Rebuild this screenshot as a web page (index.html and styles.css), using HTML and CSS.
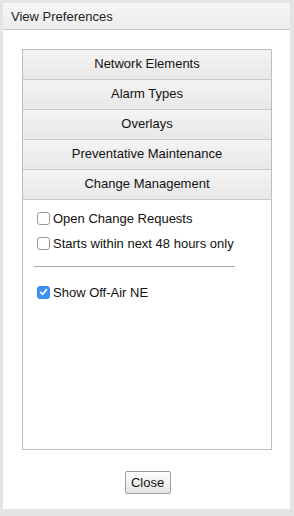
FILE: index.html
```html
<!DOCTYPE html>
<html>
<head>
<meta charset="utf-8">
<link rel="stylesheet" href="styles.css">
</head>
<body>
<div class="dialog">
  <div class="titlebar">View Preferences</div>
  <div class="dialog-body">
    <div class="panel">
      <div class="acc-head">Network Elements</div>
      <div class="acc-head">Alarm Types</div>
      <div class="acc-head">Overlays</div>
      <div class="acc-head">Preventative Maintenance</div>
      <div class="acc-head">Change Management</div>
      <div class="acc-content">
        <label class="opt"><span class="box"></span>Open Change Requests</label>
        <label class="opt"><span class="box"></span>Starts within next 48 hours only</label>
        <div class="sep"></div>
        <label class="opt"><span class="box checked"><svg width="12" height="12" viewBox="0 0 12 12"><path d="M2.8 6.3 L5 8.5 L9.3 3.4" fill="none" stroke="#fff" stroke-width="1.8" stroke-linecap="round" stroke-linejoin="round"/></svg></span>Show Off-Air NE</label>
      </div>
    </div>
    <div class="actions">
      <button class="btn">Close</button>
    </div>
  </div>
</div>
</body>
</html>
```
FILE: styles.css
```css
html, body {
  margin: 0;
  padding: 0;
}
body {
  background: #e4e4e4;
  font-family: "Liberation Sans", Arial, Helvetica, sans-serif;
  font-size: 13px;
  color: #111;
  padding: 3px 4px 0 3px;
}
.dialog {
  width: 287px;
  height: 506px;
  background: #fff;
  display: flex;
  flex-direction: column;
  box-shadow: 0 3px 0 -1px #e4e4e4, 0 4px 0 -1px #b4b4b4;
}
.titlebar {
  height: 27px;
  box-sizing: border-box;
  padding: 6px 0 0 8px;
  background: linear-gradient(#f6f6f6, #ededed);
  border-bottom: 1px solid #c6c6c6;
  line-height: 16px;
  color: #222;
}
.dialog-body {
  flex: 1;
  display: flex;
  flex-direction: column;
  padding: 19px 18px 14px 19px;
}
.panel {
  height: 401px;
  box-sizing: border-box;
  border: 1px solid #bdbdbd;
  display: flex;
  flex-direction: column;
}
.acc-head {
  height: 29px;
  border-bottom: 1px solid #c8c8c8;
  background: linear-gradient(#f4f4f4, #e8e8e8);
  text-align: center;
  line-height: 27px;
  color: #111;
}
.acc-content {
  flex: 1;
  padding: 10px 0 0 14px;
  display: flex;
  flex-direction: column;
}
.opt {
  display: flex;
  align-items: center;
  height: 16px;
  margin-bottom: 9px;
  gap: 3px;
  color: #111;
}
.box {
  width: 11px;
  height: 11px;
  border: 1px solid #9a9a9a;
  border-radius: 3px;
  background: #fff;
  flex: none;
  display: flex;
  align-items: center;
  justify-content: center;
}
.box.checked {
  border-color: #3a87f0;
  background: #3d8ef5;
}
.box svg {
  display: block;
}
.sep {
  width: 201px;
  height: 1px;
  background: #a8a8a8;
  margin: 6px 0 17px -3px;
}
.actions {
  flex: 1;
  display: flex;
  justify-content: center;
  align-items: flex-start;
  padding-top: 21px;
}
.btn {
  font-family: "Liberation Sans", Arial, Helvetica, sans-serif;
  font-size: 13px;
  color: #111;
  width: 46px;
  height: 23px;
  padding: 0;
  border: 1px solid #9c9c9c;
  border-radius: 2px;
  background: linear-gradient(#ffffff, #e4e4e4);
  margin-left: 1px;
}
```
